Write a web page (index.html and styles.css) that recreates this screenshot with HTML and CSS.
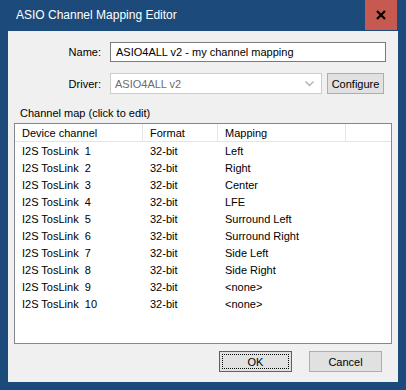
FILE: index.html
```html
<!DOCTYPE html>
<html>
<head>
<meta charset="utf-8">
<link rel="stylesheet" href="styles.css">
</head>
<body>
<div class="window">
  <div class="titlebar">
    <span class="title">ASIO Channel Mapping Editor</span>
    <div class="close">
      <svg width="10" height="10" viewBox="0 0 10 10"><path d="M1 1 L9 9 M9 1 L1 9" stroke="#000" stroke-width="2.2" fill="none"/></svg>
    </div>
  </div>
  <div class="client">
    <div class="row">
      <label class="lbl">Name:</label>
      <div class="input">ASIO4ALL v2 - my channel mapping</div>
    </div>
    <div class="row row2">
      <label class="lbl">Driver:</label>
      <div class="combo">
        <span>ASIO4ALL v2</span>
        <svg class="chev" width="9" height="6" viewBox="0 0 9 6"><path d="M0.5 0.5 L4.5 4.5 L8.5 0.5" stroke="#b0b0b0" stroke-width="1.3" fill="none"/></svg>
      </div>
      <div class="btn cfg">Configure</div>
    </div>
    <div class="maplbl">Channel map (click to edit)</div>
    <div class="list">
      <div class="hdr">
        <div class="c1 h">Device channel</div>
        <div class="c2 h">Format</div>
        <div class="c3 h">Mapping</div>
        <div class="c4"></div>
      </div>
      <div class="r"><div class="c1">I2S TosLink  1</div><div class="c2">32-bit</div><div class="c3">Left</div></div>
      <div class="r"><div class="c1">I2S TosLink  2</div><div class="c2">32-bit</div><div class="c3">Right</div></div>
      <div class="r"><div class="c1">I2S TosLink  3</div><div class="c2">32-bit</div><div class="c3">Center</div></div>
      <div class="r"><div class="c1">I2S TosLink  4</div><div class="c2">32-bit</div><div class="c3">LFE</div></div>
      <div class="r"><div class="c1">I2S TosLink  5</div><div class="c2">32-bit</div><div class="c3">Surround Left</div></div>
      <div class="r"><div class="c1">I2S TosLink  6</div><div class="c2">32-bit</div><div class="c3">Surround Right</div></div>
      <div class="r"><div class="c1">I2S TosLink  7</div><div class="c2">32-bit</div><div class="c3">Side Left</div></div>
      <div class="r"><div class="c1">I2S TosLink  8</div><div class="c2">32-bit</div><div class="c3">Side Right</div></div>
      <div class="r"><div class="c1">I2S TosLink  9</div><div class="c2">32-bit</div><div class="c3">&lt;none&gt;</div></div>
      <div class="r"><div class="c1">I2S TosLink  10</div><div class="c2">32-bit</div><div class="c3">&lt;none&gt;</div></div>
    </div>
    <div class="buttons">
      <div class="btn ok"><span class="focus">OK</span></div>
      <div class="btn">Cancel</div>
    </div>
  </div>
</div>
</body>
</html>
```

FILE: styles.css
```css
* { box-sizing: border-box; }
html, body { margin: 0; padding: 0; }
body {
  width: 406px;
  height: 390px;
  overflow: hidden;
  font-family: "Liberation Sans", Arial, sans-serif;
  font-size: 11px;
  color: #000;
}
.window {
  width: 406px;
  height: 390px;
  background: #1c4a7a;
  padding: 0 8px 8px 8px;
  display: flex;
  flex-direction: column;
}
.titlebar {
  height: 31px;
  margin: 0 -8px;
  display: flex;
  align-items: center;
  justify-content: space-between;
  padding-left: 16px;
  padding-right: 9px;
}
.title {
  color: #fff;
  font-size: 12px;
  margin-top: -1px;
}
.close {
  width: 32px;
  height: 30px;
  margin-top: -1px;
  background: #c75a50;
  display: flex;
  align-items: center;
  justify-content: center;
}
.client {
  flex: 1;
  background: #f0f0f0;
  padding: 11px 6px 0 6px;
  display: flex;
  flex-direction: column;
}
.row {
  display: flex;
  align-items: center;
}
.row2 { margin-top: 11px; }
.lbl {
  width: 87px;
  text-align: right;
  margin-right: 9px;
  color: #000;
}
.input {
  width: 276px;
  height: 20px;
  border: 1px solid #7a7a7a;
  background: #fff;
  padding-left: 5px;
  line-height: 18px;
}
.combo {
  width: 212px;
  height: 21px;
  border: 1px solid #cccccc;
  background: #fff;
  padding-left: 4px;
  color: #6d6d6d;
  display: flex;
  align-items: center;
  justify-content: space-between;
  padding-right: 7px;
}
.btn {
  height: 21px;
  border: 1px solid #adadad;
  background: #e1e1e1;
  display: flex;
  align-items: center;
  justify-content: center;
}
.cfg {
  width: 57px;
  margin-left: 5px;
}
.maplbl {
  margin-top: 12px;
  margin-bottom: 3px;
  height: 14px;
  line-height: 14px;
  padding-left: 6px;
}
.list {
  width: 378px;
  height: 221px;
  border: 1px solid #828790;
  background: #fff;
}
.hdr {
  display: flex;
  height: 18px;
  border-bottom: 1px solid #e5e5e5;
}
.hdr .h {
  border-right: 1px solid #e5e5e5;
}
.c1, .c2, .c3 {
  padding-left: 7px;
  white-space: pre;
  display: flex;
  align-items: center;
}
.c1 { width: 128px; }
.c2 { width: 75px; }
.c3 { width: 128px; }
.c4 { flex: 1; }
.r {
  display: flex;
  height: 17px;
}
.buttons {
  margin-top: 7px;
  display: flex;
  justify-content: flex-end;
  gap: 17px;
  padding-right: 10px;
}
.buttons .btn { width: 73px; }
.ok {
  border-color: #0078d7;
  padding: 2px;
}
.focus {
  width: 100%;
  height: 100%;
  border: 1px dotted #000;
  display: flex;
  align-items: center;
  justify-content: center;
}
```
